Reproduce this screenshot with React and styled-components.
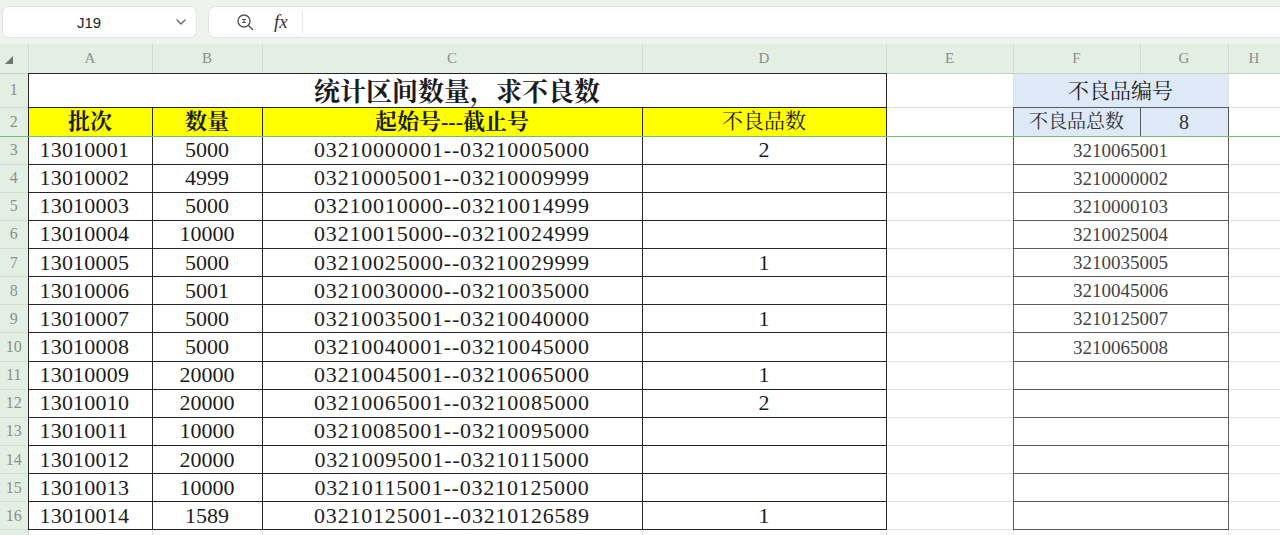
import React from "react";
import styled, { createGlobalStyle } from "styled-components";

const GlobalStyle = createGlobalStyle`
  html, body {
    margin: 0;
    padding: 0;
    background: #ffffff;
    overflow: hidden;
  }
  body {
    font-family: "Liberation Serif", "Noto Serif CJK SC", "Noto Sans CJK SC", serif;
  }
`;

const CJK = `"Liberation Serif", "Noto Serif CJK SC", "Noto Sans CJK SC", serif`;

const Page = styled.div`
  width: 1280px;
  height: 535px;
  overflow: hidden;
  background: #ffffff;
`;

const Toolbar = styled.div`
  height: 44px;
  background: #eef3ee;
  display: flex;
  align-items: center;
  gap: 11px;
  padding: 0 0 0 2px;
  box-sizing: border-box;
`;

const NameBox = styled.div`
  width: 195px;
  height: 32px;
  background: #ffffff;
  border: 1px solid #dfe5df;
  border-radius: 7px;
  box-sizing: border-box;
  display: flex;
  align-items: center;
  justify-content: space-between;
  padding: 0 8px 0 74px;
  font-family: "Liberation Sans", Arial, sans-serif;
  font-size: 15px;
  color: #222;
`;

const FormulaBox = styled.div`
  flex: 1;
  height: 32px;
  background: #ffffff;
  border: 1px solid #dfe5df;
  border-right: none;
  border-radius: 7px 0 0 7px;
  box-sizing: border-box;
  display: flex;
  align-items: center;
  padding-left: 27px;
  gap: 20px;
`;

const Fx = styled.span`
  font-family: "Liberation Serif", serif;
  font-style: italic;
  font-size: 19px;
  color: #333;
  padding-right: 14px;
  border-right: 1px solid #e3e6e3;
  line-height: 22px;
`;

const Sheet = styled.table`
  border-collapse: collapse;
  table-layout: fixed;
  width: 1280px;
  color: #1c1c1c;
`;

const HeadRow = styled.tr`
  height: 29px;
`;

const Row = styled.tr`
  height: ${(p) => p.$h || 28.15}px;
`;

const ColHead = styled.th`
  background: #e3efe3;
  border-right: 1px solid #cfdccf;
  border-bottom: 1px solid #c4d2c4;
  font-family: "Liberation Serif", serif;
  font-weight: normal;
  font-size: 15px;
  color: #8a8f8a;
  padding: 0;
  text-align: center;
`;

const Corner = styled(ColHead)`
  position: relative;
  &::after {
    content: "";
    position: absolute;
    left: 5px;
    top: 12px;
    border-style: solid;
    border-width: 0 0 8px 8px;
    border-color: transparent transparent #6f756f transparent;
  }
`;

const RowHead = styled.td`
  background: #e3efe3;
  border-right: 1px solid #c4d2c4;
  border-bottom: 1px solid #d3ded3;
  font-family: "Liberation Serif", serif;
  font-size: 16px;
  color: #8a8f8a;
  padding: 0;
  text-align: center;
  ${(p) => p.$freeze && "border-bottom: 1px double #72bd72;"}
`;

const Cell = styled.td`
  padding: ${(p) => (p.$drop ? `${p.$drop}px` : "0")} 0 0 ${(p) => (p.$left ? "11px" : "0")};
  border: 1px solid #dde4dd;
  ${(p) => p.$box && `border: 1px double ${p.$box};`}
  ${(p) => p.$freeze && "border-bottom: 1px double #72bd72;"}
  background: ${(p) => p.$bg || "transparent"};
  text-align: ${(p) => (p.$left ? "left" : "center")};
  font-family: ${CJK};
  font-size: ${(p) => p.$size || 22}px;
  font-weight: ${(p) => (p.$bold ? "bold" : "normal")};
  letter-spacing: ${(p) => p.$spacing || 0}px;
  color: ${(p) => p.$color || "#1c1c1c"};
  white-space: nowrap;
  overflow: hidden;
  line-height: 1;
`;

const cols = [28, 124, 110, 380, 244, 127, 127, 88, 52];
const letters = ["A", "B", "C", "D", "E", "F", "G", "H"];

const data = [
  ["13010001", "5000", "03210000001--03210005000", "2", "3210065001"],
  ["13010002", "4999", "03210005001--03210009999", "", "3210000002"],
  ["13010003", "5000", "03210010000--03210014999", "", "3210000103"],
  ["13010004", "10000", "03210015000--03210024999", "", "3210025004"],
  ["13010005", "5000", "03210025000--03210029999", "1", "3210035005"],
  ["13010006", "5001", "03210030000--03210035000", "", "3210045006"],
  ["13010007", "5000", "03210035001--03210040000", "1", "3210125007"],
  ["13010008", "5000", "03210040001--03210045000", "", "3210065008"],
  ["13010009", "20000", "03210045001--03210065000", "1", ""],
  ["13010010", "20000", "03210065001--03210085000", "2", ""],
  ["13010011", "10000", "03210085001--03210095000", "", ""],
  ["13010012", "20000", "03210095001--03210115000", "", ""],
  ["13010013", "10000", "03210115001--03210125000", "", ""],
  ["13010014", "1589", "03210125001--03210126589", "1", ""],
];

const DARK = "#262626";
const GREY = "#5a5a5a";
const YELLOW = "#ffff00";
const BLUE = "#dde9f6";

const SearchIcon = () => (
  <svg width="18" height="18" viewBox="0 0 18 18" fill="none" stroke="#555" strokeWidth="1.4">
    <circle cx="8" cy="8" r="6" />
    <path d="M12.5 12.5 L16.5 16.5" strokeLinecap="round" />
    <path d="M6 6.5 H10 M6 9.5 H10 M8 6.5 V9.5" strokeWidth="1" />
  </svg>
);

const Chevron = () => (
  <svg width="14" height="14" viewBox="0 0 14 14" fill="none" stroke="#666" strokeWidth="1.4">
    <path d="M3 5 L7 9 L11 5" strokeLinecap="round" strokeLinejoin="round" />
  </svg>
);

const App = () => {
  return (
    <Page>
      <GlobalStyle />
      <Toolbar>
        <NameBox>
          <span>J19</span>
          <Chevron />
        </NameBox>
        <FormulaBox>
          <SearchIcon />
          <Fx>fx</Fx>
        </FormulaBox>
      </Toolbar>
      <Sheet>
        <colgroup>
          {cols.map((w, i) => (
            <col key={i} style={{ width: w }} />
          ))}
        </colgroup>
        <tbody>
          <HeadRow>
            <Corner />
            {letters.map((l) => (
              <ColHead key={l}>{l}</ColHead>
            ))}
            <ColHead />
          </HeadRow>
          <Row $h={34}>
            <RowHead>1</RowHead>
            <Cell colSpan={4} $box={DARK} $bold $size={26} $drop={5}>
              统计区间数量，求不良数
            </Cell>
            <Cell />
            <Cell colSpan={2} $bg={BLUE} $size={21} $drop={3} style={{ borderBottom: `1px double ${GREY}` }}>
              不良品编号
            </Cell>
            <Cell />
            <Cell />
          </Row>
          <Row $h={29}>
            <RowHead $freeze>2</RowHead>
            <Cell $box={DARK} $bg={YELLOW} $bold $freeze>批次</Cell>
            <Cell $box={DARK} $bg={YELLOW} $bold $freeze>数量</Cell>
            <Cell $box={DARK} $bg={YELLOW} $bold $freeze>起始号---截止号</Cell>
            <Cell $box={DARK} $bg={YELLOW} $freeze $size={21}>不良品数</Cell>
            <Cell $freeze />
            <Cell $box={GREY} $bg={BLUE} $freeze $size={19} $color="#333">不良品总数</Cell>
            <Cell $box={GREY} $bg={BLUE} $freeze $size={20} $color="#333">8</Cell>
            <Cell $freeze />
            <Cell $freeze />
          </Row>
          {data.map((r, i) => (
            <Row key={i}>
              <RowHead>{i + 3}</RowHead>
              <Cell $box={DARK} $left $spacing={0.2}>{r[0]}</Cell>
              <Cell $box={DARK}>{r[1]}</Cell>
              <Cell $box={DARK} $spacing={0.8}>{r[2]}</Cell>
              <Cell $box={DARK}>{r[3]}</Cell>
              <Cell />
              <Cell colSpan={2} $box={GREY} $size={19} $color="#444">
                {r[4]}
              </Cell>
              <Cell />
              <Cell />
            </Row>
          ))}
          <Row>
            <RowHead />
            <Cell />
            <Cell />
            <Cell />
            <Cell />
            <Cell />
            <Cell colSpan={2} />
            <Cell />
            <Cell />
          </Row>
        </tbody>
      </Sheet>
    </Page>
  );
};

export default App;
